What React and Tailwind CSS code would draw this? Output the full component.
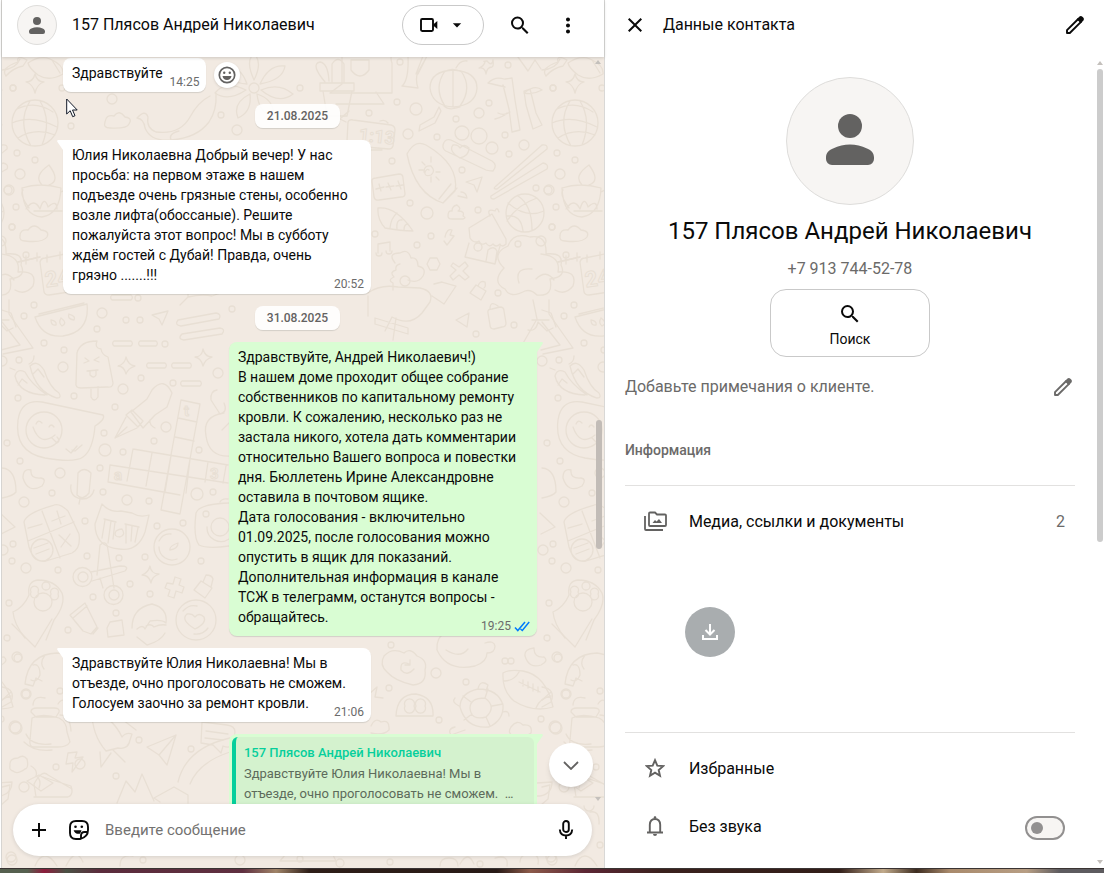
import { MdSearch, MdMoreVert, MdArrowDropDown, MdClose, MdAdd } from 'react-icons/md'

const messages = [
  { id: 1, text: 'Здравствуйте', time: '14:25', reaction: true },
  { id: 2, date: '21.08.2025' },
  {
    id: 3,
    tail: true,
    text: 'Юлия Николаевна Добрый вечер! У нас просьба: на первом этаже в нашем подъезде очень грязные стены, особенно возле лифта(обоссаные). Решите пожалуйста этот вопрос! Мы в субботу ждём гостей с Дубай! Правда, очень гряэно\u00a0.......!!!',
    time: '20:52',
  },
  { id: 4, date: '31.08.2025' },
  {
    id: 5,
    own: true,
    tail: true,
    text: 'Здравствуйте, Андрей Николаевич!)\nВ нашем доме проходит общее собрание собственников по капитальному ремонту кровли. К сожалению, несколько раз не застала никого, хотела дать комментарии относительно Вашего вопроса и повестки дня. Бюллетень Ирине Александровне оставила в почтовом ящике.\nДата голосования - включительно 01.09.2025, после голосования можно опустить в ящик для показаний. Дополнительная информация в канале ТСЖ в телеграмм, останутся вопросы - обращайтесь.',
    time: '19:25',
  },
  {
    id: 6,
    tail: true,
    text: 'Здравствуйте Юлия Николаевна! Мы в отъезде, очно проголосовать не сможем. Голосуем заочно за ремонт кровли.',
    time: '21:06',
  },
]

// small filler circles of the wallpaper: x, y, r
const dots = [
  [13, 88, 3], [62, 88, 3], [112, 99, 5], [71, 126, 3], [300, 88, 3], [221, 115, 3], [237, 130, 5],
  [17, 153, 3], [35, 160, 3], [20, 174, 5], [9, 190, 5], [12, 227, 3], [26, 255, 3], [400, 62, 3],
  [397, 102, 3], [416, 109, 6], [369, 113, 3], [489, 103, 3], [479, 113, 5], [456, 119, 3], [508, 65, 3],
  [553, 88, 3], [408, 134, 5], [437, 137, 3], [505, 135, 3], [524, 145, 5], [509, 154, 3], [392, 161, 3],
  [462, 170, 3], [410, 203, 3], [427, 213, 6], [478, 210, 3], [536, 188, 3], [548, 190, 4], [556, 207, 3],
  [552, 227, 3], [541, 241, 5], [518, 244, 3], [375, 234, 3], [431, 236, 3], [417, 245, 3], [498, 293, 3],
  [514, 325, 3], [476, 334, 3], [34, 305, 3], [24, 316, 3], [102, 313, 5], [97, 329, 3], [126, 320, 3],
  [140, 320, 3], [138, 298, 3], [165, 344, 3], [44, 343, 3], [64, 350, 3], [63, 367, 5], [19, 360, 3],
  [2, 361, 5], [18, 398, 3], [74, 396, 3], [123, 389, 5], [141, 378, 3], [173, 383, 3], [218, 373, 5],
  [232, 309, 3], [115, 407, 3], [104, 433, 3], [105, 450, 6], [123, 452, 3], [154, 441, 3], [166, 427, 5],
  [199, 450, 3], [7, 443, 3], [20, 461, 3], [60, 473, 5], [100, 468, 3], [103, 492, 3], [52, 493, 3],
  [24, 502, 5], [127, 500, 5], [149, 501, 3], [197, 494, 6], [213, 492, 3], [85, 521, 3], [157, 526, 3],
  [183, 523, 3], [206, 514, 3], [13, 544, 3], [3, 550, 5], [12, 561, 3], [26, 568, 5], [58, 570, 3],
  [87, 556, 3], [119, 558, 3], [145, 557, 3], [130, 584, 3], [150, 594, 3], [93, 597, 3], [9, 603, 3],
  [116, 613, 3], [68, 630, 3], [7, 638, 3], [201, 561, 3], [17, 657, 5], [26, 694, 5], [60, 691, 3],
  [80, 707, 3], [15, 727, 6], [139, 740, 3], [191, 749, 3], [56, 767, 3], [116, 776, 3], [80, 764, 5],
  [391, 645, 3], [436, 673, 5], [466, 682, 3], [389, 688, 3], [439, 720, 3], [505, 661, 3], [511, 661, 3],
  [558, 658, 4], [566, 694, 4], [541, 719, 3], [556, 728, 6], [24, 787, 5], [11, 857, 5], [60, 845, 3],
  [143, 860, 3], [390, 862, 3], [552, 860, 5], [480, 864, 3], [240, 860, 5], [300, 859, 3], [340, 863, 4],
]

const doodles = [
  // globe
  'M12 123a23 23 0 1 0 46 0a23 23 0 1 0-46 0M17 109q18-9 36 3M12 123q20-9 45 4M18 138q17-11 37-3M30 101q-13 21 1 45M40 101q12 20 2 44',
  'M35 74q2 8 9 8q-7 2-9 11q-2-9-9-11q7 0 9-8zM28 63q12-8 22-4q14 6 13 15q-14 8-25 1q-9-7-10-12zM52 60l8 13M2 70q14-1 18-11',
  // whale and clouds
  'M137 118q8-9 11-1q-2 11 8 15q24 3 34-15q8-15 20-21M137 118q7 1 8 10q6 14 26 12q26-2 38-18q8-12 7-28M171 140q-3-6 8-9M105 122q1-8 9-6q5-7 11 1q8 1 4 7q-2 5-19 4q-7 0-5-6z',
  'M20 236q0-7 8-6q6-8 13 0q9 1 6 7q-4 6-22 4q-6 0-5-5z',
  // flower
  'M254 80q-9-20 0-26q9 8 0 26M260 84q9-20 25-18q-2 14-25 18M261 90q18-8 32 4q-14 11-32-4M257 94q18 6 16 22q-14-3-16-22M250 94q2 18-12 24q-6-15 12-24M246 90q-18 12-31 3q10-13 31-3M247 84q-20-1-23-17q16-3 23 17M249 88a5 5 0 1 0 10 0a5 5 0 1 0-10 0',
  // cactus
  'M320 83h34v8h-34zM323 91l4 25h20l5-25M325 82q-15-18-5-20q8 1 9 19M332 82v-18q6-9 12 0v18',
  // laptop guy
  'M342 56v28l-12 9h62V63q-2-5 0-8M351 60h18v10q-9 12-18 0zM376 92l8 12h-48',
  // horn
  'M408 56q1 24-6 30l16 2q-3-9 0-16l8-14M423 56l-7 18M427 56l-9 18',
  // lantern
  'M430 88q0-17 24-18q23 2 23 18q-1 17-23 19q-22-1-24-19M445 71q-12 17 0 35M461 71q12 17-1 35M453 70v37M444 72q8-5 18 0M456 68q4-8 11-7M444 106q5 5 16 1M441 111l-6 12-16 8 1-6 14-8 5-10z',
  // fox
  'M518 57l10 14 7-11 6 9M546 76q-6-8 12-14q-2-8 9-2l-4 6q-10 2-17 10',
  'M485 62q-3-1 2-1q5 6 6-1q1 6-1 7q-5 0-6 7q-1-7-7-6q5-2 6-6z',
  // bamboo
  'M505 79l7-1 3 22 5 30-8 2-3-23-6-24M524 91l6-2 6 24 6 12-9 4-7-24zM488 83q7-7 16-4M488 83l17 4M524 93q11-9 18-3q-9 5-18 3M498 113q6 3 12-1M495 119q8-2 12-6',
  // clock
  'M348 122q1-3 5-2l38 5q4 1 4 5l-2 16q-1 3-4 3l-36-3q-6-1-6-5zM380 121q5-2 8 2M352 150h30M341 118l8-7M346 122l-6-3',
  // diya lamp
  'M22 188q18-6 39 0q-1 26-19 29q-19-1-20-29M42 185q-9-9 7-20q12 16 0 20M23 190q-4 4 6 18M26 209q8-12 14 0q4-14 8-2q9-8 9 2M61 192q10-6 14 1M34 211h28',
  // surfboard
  'M407 154q8-15 19-9q34 20 29 46l-12 12q-28-9-36-49M451 184l-12 15M457 188l-14 15M461 192q5 0 6 6l-9-2M424 172q0-7 7-6q5 5 0 9q-7 2-6-3q2-4 4-2M431 157v5M431 182v-5M419 170h4M440 172h-4M422 162l3 3M439 180l-3-3',
  // sofa cushions
  'M443 145q2-8 10-4l39 20q6 4 1 10q-4 0-7-1l-38-18q-6-2-5-7M455 133a7 7 0 1 0 14 0a7 7 0 1 0-14 0M471 136a8 8 0 1 0 16 0a8 8 0 1 0-16 0M486 148a6 6 0 1 0 12 0a6 6 0 1 0-12 0M460 158q-12-7-7-13q5-1 7 3q4-5 9 0q0 8-9 10',
  'M466 182l16-5-5 15-3-7zM372 181q0-3 4-3l23-4q4 0 4 4l2 16q0 3-4 3l-22 3q-4 1-5-3zM376 189l8-2M379 184l2 7M386 187l8-1M388 183l3 7M396 186l7-1M398 181l3 8',
  // chopsticks
  'M496 186l46-41q6-1 5 4l-50 40q-5 0-1-3M491 196l52-33q6 1 4 6l-53 30q-4 0-3-3',
  // basketball
  'M506 213a19 19 0 1 0 38 0a19 19 0 1 0-38 0M508 203q18 16 36 8M518 196q14 9 14 34M537 198q-20 7-30 23M507 216q14-2 16 15',
  // shell, poop, notes
  'M378 208q18-2 35 23q-12 0-28-3q-8-9-7-20M390 228q1-10 7-15M397 229q-1-10 5-9M404 230q0-6 4-6M448 216q0-6 4-5q0-5 5-6q5 4 1 6q7 0 5 5q4 2 0 3h-11q-4 0-4-3M378 253v-9l12-2v9M376 253a3 3 0 1 0 6 0M386 251a3 3 0 1 0 6 0',
  // hut
  'M469 228l23-14 14 25v5q-4 4-6 0q-4 4-7 0q-4 4-7-1q-5 3-7-2q-5 3-9-3zM469 243l-4 14 30 7 5-18M474 247a3 3 0 1 0 8 0a3 3 0 1 0-8 0M486 261l2-11q6-5 9 1l-2 13M490 216q-4-8 5-5q2-5 4 1M445 237q2-9 7-7l-2 5 4 1-7 9-3-4',
  'M427 264l3-6h7l3 6-3 6h-7zM453 263l6 4 6-5 3 4-5 5 6 6-4 3-6-5-6 5-3-4 6-6-5-4zM395 263q-8-10 5-10q8-5 11 5q7-1 7 8q9 2 5 10q-5 8-15 4M393 290v-7q-6-3 1-6q-5-5 2-7q-1-5 4-6M400 281a5 5 0 1 0 10 0a5 5 0 1 0-10 0',
  // runner
  'M368 293q12-9 30-6l22 1q14 3 10 14l-8 11q-12 14-30 4l-7 14M368 296v20M434 284l8-2 14 4-12 18-12-8M396 318l-3 22M375 318l33 10v6l-33-10z',
  // tree cloud
  'M505 289q-14-7-1-21q-14-14 4-22q5-14 22-9q17-3 16 17q18-2 15 11q6 12-11 14q4 18-13 16q-6-6-12-4q-15 8-20-2M519 283q-5-16 13-14M536 279q10-10 18 1M533 300l4 19-15 26M549 300v14l24 34-30 6M532 320h17M528 330q8 2 10-8l9 9 6-3',
  'M558 262l22-5M566 256v8M577 253v8M18 262l22-5',
  'M40 262q1-4 5-4l20-4q4 1 4 4l4 30q0 4-4 4l-20 3q-4 0-5-3zM47 255v7M60 252v7M1 254q20 2 17 18q20-2 15 14q-8 10-18 4',
  'M470 293l6-8 10 6-5 9zM478 286q2-6 7-4q1 5-1 6M488 313q-1-4 4-4l8-2q4 0 4 4l2 12q0 4-4 4l-8 2q-4 0-4-4zM490 309q0-9 8-3M456 320l13-7-2 14z',
  // watermelon
  'M35 317l52-13q3 28-24 32q-21 2-28-19M39 314l45-11M51 320q6 1 5 5q-5 1-5-5M61 318q7 5 1 8q-4-3-1-8M69 314q7 2 5 6q-7-1-5-6M2 322l18 23-19 5M2 310l9 3 5 14',
  // dashes and sliders
  'M112 295h19a3 3 0 0 1 0 5h-19a3 3 0 0 1 0-5M114 341h17a3 3 0 0 1 0 5h-17a3 3 0 0 1 0-5M140 341h16a3 3 0 0 1 0 5h-16a3 3 0 0 1 0-5M148 363h17a3 3 0 0 1 0 5h-17a3 3 0 0 1 0-5M173 363h17a3 3 0 0 1 0 5h-17a3 3 0 0 1 0-5M182 381h18a3 3 0 0 1 0 5h-18a3 3 0 0 1 0-5M178 320l38-7q6 1 3 6l-38 7q-7-1-3-6M182 334l38-6q6 1 2 6l-38 6q-7-1-2-6M152 315l16-4-6 14-3-6z',
  'M180 305l8-8v-6M188 297q14-3 24-1l14-5',
  // popsicle
  'M77 353q3-12 20-12q-3 7 4 8q1 6 7 8l5 26q0 5-6 4l-26 1q-6 0-5-5zM91 388v9q3 6 7 0v-10M85 358l4 3-5 2M99 357l-5 3 5 2M87 371l11-1M90 371v4q4 4 6 0v-5',
  'M126 357q2 8 9 9q-7 2-9 8q-2-8-8-8q7-2 8-9zM203 349q2 8 9 8q-7 2-9 9q-2-8-8-9q7 0 8-8z',
  // chili
  'M30 366q7-7 14 4q6 18 15 23q3 5-2 5q-21-6-27-32M15 376q2-8 10-4q6 12 22 23M29 364q5-2 5-8M15 370l-5-2M33 374l5-5 6 8M18 385l4-6 5 4M15 376q4 18 30 19',
  // chat bubble
  'M18 420q3-21 24-18l61 13q3 4-8 11q-2 24-12 31q-8 6-38 1q-31-6-27-38M26 430a18 18 0 1 0 36 0a18 18 0 1 0-36 0M33 427q7 20 22 8M36 424q2-5 6-1M49 427q2-4 5 0M52 438l5 5q4-2 0-6M66 449l5 4 6-7M72 450l3 1 7-6',
  // ink pen
  'M131 412l16-13 5-9q12-14 20 3l-5 14-12 8-12 13zM126 415l6-5 11 11-5 6zM126 417l-11 21 22-10M115 438l12-11M150 420q-1 5 5 8',
  'M217 390q-7 1-6 10l9 14q8-2 4-11M206 436q-4-20 18-23M206 436q3 22 26 20M222 430l8-8',
  // crossword
  'M181 400l19 4-20 110-19-4zM178 418l19 4M175 437l19 4M133 449l95 16M110 465l118 18M133 449l-6 32M152 453l-6 33M110 465l-2 17 72 13M171 456l-6 36M190 459l-4 34M208 462l-3 20M226 466l-3 17',
  'M31 470q-8-2-8 8q5 16 19 8q5-7-1-8q-11 1-10-8M78 473q6-7 13 0l-2 20q-6 8-12 2zM71 485q-2 12 11 14q10 0 12-9M80 499l-1 5M2 468q14 1 14 24q-3 4-14 6M0 513l15 14-14 7',
  // calculator
  'M24 522q2-9 30-17q6-2 14 6l11 23q2 15-7 19l-26 8q-12 2-17-14zM42 511l18 47M28 541l46-19M28 528l14-4M57 511l4 13M52 521l13-5M59 535l12 11M70 534l-9 13M31 550a11 11 0 1 0 22 0a11 11 0 1 0-22 0M34 548l14-5M36 554l13-5',
  // cat
  'M102 504q8 9 19 7l11 2q8 5 17 2q-2 9-4 17q-7 20-26 17q-24-2-24-25zM105 520l-3 18M111 521l-3 22M115 522l-2 17M126 525v18M132 526l-1 15M138 528l-3 14M116 531q-3 6 4 6q6-2 2-8q-3 0-6 2M104 519l12 3M125 524l14 3',
  // stopwatch and camera
  'M154 547a18 18 0 1 0 36 0a18 18 0 1 0-36 0M159 547a13 13 0 0 0 18 12M170 550q-1-4 8-7q0 6-8 7M159 541q4-8 12-7M196 513q3-9 33-10M196 513q-3 24 3 32q8 4 30 1M211 527a9 9 0 1 0 18 0a9 9 0 1 0-18 0M207 527a14 14 0 0 0 22 12M220 502q2-4 8-3',
  // scissors
  'M73 577a9 9 0 1 0 19 0a9 9 0 1 0-19 0M78 577a5 5 0 1 0 10 0a5 5 0 1 0-10 0M104 595a9 9 0 1 0 19 0a9 9 0 1 0-19 0M109 595a5 5 0 1 0 10 0a5 5 0 1 0-10 0M91 572l29-6q10 0 5 5l-33 10M97 575l3-30q7-6 8 5l6 38M103 588l-3-10',
  'M150 566q1 8 9 8q-7 2-8 9q-2-8-9-8q6-2 8-9zM167 583l6 1 2-7 6 2-2 6 5 2-2 6-6-2-2 7-6-2 2-6-5-2zM194 590l7-9 11 7-7 10zM203 582l3-7q6 0 7 4l-2 8',
  // foot and tube
  'M13 612q11-5 16-17q-2-14 9-15q17 0 24 13q4 11-8 27l-8 20M31 592a4 4 0 1 0 7 0a4 4 0 1 0-7 0M42 586a4 4 0 1 0 8 0a4 4 0 1 0-8 0M51 594a4 4 0 1 0 7 0a4 4 0 1 0-7 0M34 602a9 9 0 1 0 18 0a9 9 0 1 0-18 0M13 612q1 12 12 26M70 615l15-12 12 24-6 7-8-3zM73 618l14-12M98 628l-5 6',
  'M132 628q0-20 20-24q16 4 14 19q-4-4-16-2l-5 8q-2-5-8 0M146 626q5-3 8 1q6-3 12-2M137 637l10 8q14-4 18-12M107 628l3-6 12-2 2 15-16 2zM176 620a20 20 0 1 0 40 0a20 20 0 1 0-40 0M195 629q-15-9-8-15q5-1 8 3q4-5 9 0q3 6-9 12M183 611q6-7 14-5M208 628q-5 7-14 6',
  // heart
  'M12 624l23 23 17-28',
  // taco
  'M25 684q3-30 32-31q14 2 13 8M25 684l8 2 3-8 6 3M33 665q7-2 7 10q-3 8-9 5M45 655q-6 8-1 14M2 687q14 2 9 15l-9 5M2 700l9-8',
  // backpack
  'M31 712q0-4 6-4h17q6 0 5 4l-3 5H36zM33 705q1-10 12-7M58 704q6-9 10 3M32 718q10-5 27 0q8 4 8 14l3 10q-3 5-12 5H34q-5 0-4-7zM26 734q5 12 25 10M24 742q10 10 28 8M60 715q10 0 11 16',
  // rocket, hand
  'M92 712q20 4 30 25q4-5 10-3l-2 6q-2 10-12 8l-12 3q-14-16-14-39M100 752l1 15 10-14M113 750l12 12M118 716l18 14',
  'M68 753l9-1-2 6 8-1-11 15 1-9-7 1zM147 747l29-12-9 30-8-10zM159 755l17-20M10 766q-1-8 8-8q5-4 9 1q2 9-2 10q-8 6-12 2q-4-1-3-5M31 766q7 4 5 10q6 4 3 12',
  // crown and chat
  'M202 722l25 3q8 1 8 7l-2 12q-3 5-10 2l-2 7-8-8-12-2zM206 731l22 3M205 738l18 2',
  // car bus
  'M36 797l-2-13q8-15 14-9l24 14M34 797h34q6-2 3-11l-28-9M44 806a5 5 0 1 0 10 0M117 803l9-22 9 11 7-18 12 27M178 782q8-34 52-44M190 784q9-22 40-32M160 802l-6-4 20-11 14 8v8M2 787l8-2-2 14-7 6',
  // refresh cloud
  'M384 656q8-9 20-3q6-6 13 3q11 4 8 14q2 14-12 15q-18-4-26-13q-8-7-3-16M409 664q-9-4-8 6q6 7 13-1M410 660v5h-5',
  // boy
  'M437 650q-1-13 9-18M437 650q10 22 38 16q12-4 12-13q8 0 8-7q-1-6-10-3M446 650q14 9 22-1',
  // moon and football
  'M534 648q-10 1-9 8q4 13 16 9q8-4 3-8q-10 1-10-9M503 673q6-4 20-2q23 4 30 36q-20 6-39-6q-12-10-11-28M519 682l21 10M523 680v6M528 682v6M533 684v7M538 687v5M504 681q10 0 15-9M536 708q4-10 15-12',
  // turtle
  'M460 707q0-14 18-18q20 0 25 16q1 15-14 22q-23 2-29-20M470 708q0-10 15-10q12 9 1 19q-15 4-16-9M478 689q2-10 10-4l-2 6M459 706q-8-4-4-8M455 727q-8 2-4 8l14-5M503 712q6-2 6 4M485 698l3-9M492 706l11-2M486 717l4 9M472 714l-8 6M471 702l-8-6',
  // ghost
  'M396 716q1-22 20-22q18 3 17 22zM405 706a5 5 0 1 0 9 0a5 5 0 1 0-9 0M416 706a5 5 0 1 0 9 0a5 5 0 1 0-9 0M368 695l9-8-2 10 8 1M371 726q4-9 10-4q9-3 8 8q-6 6-18 3M511 727q6-8 12-2q10-1 8 8q-4 4-18 3q-6-3-2-9',
  // bottom row
  'M522 784l30-2q0 12-12 14h-14zM567 781l12-6 14 8-12 8zM590 812q10-2 9 12M35 866q4-10 10-10t12 10M66 866q10-20 17-4M120 866q0-12 13-10M280 861l10-12h40l6 12zM440 866q0-8 9-8t9 8M460 864q8-14 14 0M495 858q14-4 12 8M520 862q0-8 10-8t8 10',
]

function Wallpaper() {
  return (
    <svg className="absolute inset-0 h-full w-full" aria-hidden="true">
      <defs>
        <g id="doodles" fill="none" stroke="#e8dfd4" strokeWidth="1.3" strokeLinejoin="round" strokeLinecap="round">
          {doodles.map((d) => <path key={d} d={d} />)}
          {dots.map(([x, y, r], i) => <circle key={i} cx={x} cy={y} r={r} />)}
          <g fontFamily="Roboto, sans-serif" fontWeight="700" strokeWidth="1">
            <text x="359" y="142" fontSize="18" transform="rotate(6 371 135)">1:13</text>
            <text x="45" y="286" fontSize="22" transform="rotate(-8 56 280)">24</text>
            <text x="184" y="416" fontSize="15">t</text>
            <text x="114" y="480" fontSize="15">a</text>
            <text x="210" y="479" fontSize="15">3</text>
          </g>
        </g>
      </defs>
      <g transform="translate(-2 -57)">
        <use href="#doodles" x="-540" />
        <use href="#doodles" />
        <use href="#doodles" x="540" />
        <use href="#doodles" x="1080" />
      </g>
    </svg>
  )
}

const PersonIcon = ({ className }) => (
  <svg viewBox="0 0 48 51" className={className} fill="currentColor">
    <circle cx="24" cy="12" r="12" />
    <path d="M0 43.500C0 39 2.500 36.500 7 34.500C18 29 30 29 41 34.500C45.500 36.500 48 39 48 43.500V45a6 6 0 0 1-6 6H6a6 6 0 0 1-6-6z" />
  </svg>
)

const VideoIcon = () => (
  <svg viewBox="0 0 18 14" className="h-3.5 w-[18px]">
    <rect x="1" y="1" width="12" height="12" rx="1.2" fill="none" stroke="currentColor" strokeWidth="1.900" />
    <path d="M13.500 6.200L17.300 3v8l-3.800-3.200z" fill="currentColor" />
  </svg>
)

const PencilIcon = () => (
  <svg viewBox="0 0 18 18" className="size-[18px]">
    <path d="M1 17v-2.800L12.200 3l2.800 2.800L3.800 17z" fill="none" stroke="currentColor" strokeWidth="1.900" strokeLinejoin="round" />
    <path d="M10.800 3.200L13.200.8q1.600-1.400 3.200 0l.8.800q1.400 1.600 0 3.200l-2.400 2.400z" fill="currentColor" />
  </svg>
)

const SmileIcon = () => (
  <svg viewBox="0 0 18 18" className="size-[18px]">
    <circle cx="9" cy="9" r="7.700" fill="none" stroke="currentColor" strokeWidth="1.700" />
    <circle cx="6.200" cy="6.800" r="1.200" fill="currentColor" />
    <circle cx="11.800" cy="6.800" r="1.200" fill="currentColor" />
    <path d="M4.500 10h9q-.8 4-4.500 4t-4.500-4z" fill="currentColor" />
  </svg>
)

const StickerIcon = () => (
  <svg viewBox="0 0 20 20" className="size-5" fill="none" stroke="currentColor" strokeWidth="1.900">
    <path d="M19 10V7q0-6-6-6H7Q1 1 1 7v6q0 6 6 6h4q8-2 8-9z" />
    <path d="M18.500 12h-3q-3.500 0-3.500 3.500v3" />
    <path d="M4.600 10.200h7.900q-.3 1.800-1.700 3.600-5 .4-6.200-3.600z" fill="currentColor" stroke="none" />
    <circle cx="6.500" cy="6.800" r="1.300" fill="currentColor" stroke="none" />
    <circle cx="12.800" cy="6.800" r="1.300" fill="currentColor" stroke="none" />
  </svg>
)

const MicIcon = () => (
  <svg viewBox="0 0 16 20" className="h-5 w-4" fill="none" stroke="currentColor" strokeWidth="1.900">
    <rect x="5.200" y="1" width="5.600" height="11" rx="2.800" />
    <path d="M1.800 9.500q.4 6 6.200 6t6.200-6M8 15.500V19" />
  </svg>
)

const MediaIcon = () => (
  <svg viewBox="0 0 24 20" className="h-5 w-6" fill="none" stroke="currentColor" strokeWidth="1.800">
    <path d="M2 5v13q0 1 1 1h17" />
    <path d="M6 2.500q0-1 1-1h5l2 2h8q1 0 1 1v9.500q0 1-1 1H7q-1 0-1-1z" />
    <path d="M9.500 12l2.500-3 1.500 1.500L16 8l3 4z" fill="currentColor" stroke="none" />
  </svg>
)

const StarIcon = () => (
  <svg viewBox="0 0 20 20" className="size-5" fill="none" stroke="currentColor" strokeWidth="1.900">
    <path d="M10 2.200l2.300 5.400 5.800.5-4.400 3.900 1.300 5.800-5-3.100-5 3.100L6.300 12 1.900 8.100l5.800-.5z" />
  </svg>
)

const BellIcon = () => (
  <svg viewBox="0 0 18 20" className="h-5 w-[18px]" fill="none" stroke="currentColor" strokeWidth="1.900">
    <path d="M1 16.500h16M3.800 16.500V8.800Q4 3 9 3t5.200 5.800v7.700" />
    <path d="M7.500 2.500Q7.500 0 9 0t1.500 2.500zM7 18q0 2 2 2t2-2z" fill="currentColor" stroke="none" />
  </svg>
)

const DownloadIcon = () => (
  <svg viewBox="0 0 16 16" className="size-4" fill="none" stroke="currentColor" strokeWidth="2">
    <path d="M8 0v10M3.500 6L8 10.500 12.500 6M1 11v4h14v-4" />
  </svg>
)

const Ticks = () => (
  <svg viewBox="0 0 16 11" className="h-[11px] w-4" fill="none" stroke="#007bfc" strokeWidth="1.500">
    <path d="M1 6.500L3.800 9.500 11 1M6.500 8l1.800 1.500L15.200 1" />
  </svg>
)

function ScrollArrow({ down }) {
  return (
    <svg viewBox="0 0 6 4" className="h-1 w-1.5 shrink-0 text-[#c4c0bc]" fill="currentColor">
      <path d={down ? 'M0 0h6L3 4z' : 'M0 4h6L3 0z'} />
    </svg>
  )
}

function Tail({ own }) {
  return (
    <svg
      viewBox="0 0 8 12"
      className={own ? 'absolute top-0 -right-1.5 h-3 w-2 text-[#d9fdd3]' : 'absolute top-0 -left-1.5 h-3 w-2 text-white'}
      fill="currentColor"
    >
      <path d={own ? 'M0 0h7q1.500.5.500 2L2 10H0z' : 'M8 0H1Q-.5.5.500 2L6 10h2z'} />
    </svg>
  )
}

function Bubble({ message }) {
  const { text, time, own, tail, reaction } = message
  return (
    <div className={own ? 'flex justify-end' : 'flex items-center gap-2'}>
      <div
        className={`relative max-w-[308px] rounded-lg pt-[5px] pr-[7px] pb-[9px] pl-[9px] shadow-[0_1px_1px_rgba(11,20,26,0.13)] ${
          own ? 'bg-[#d9fdd3]' : 'bg-white'
        } ${tail && (own ? 'rounded-tr-none' : 'rounded-tl-none')}`}
      >
        {tail && <Tail own={own} />}
        <p className="text-sm leading-5 whitespace-pre-line">
          {text}
          <span className="float-right mt-[11px] -mb-2 ml-[7px] flex items-center gap-[3px] text-xs leading-4 text-[#6b6b6b]">
            {time}
            {own && <Ticks />}
          </span>
        </p>
      </div>
      {reaction && (
        <button aria-label="Реакция" className="flex size-[26px] items-center justify-center rounded-full bg-white text-[#636261] shadow-sm">
          <SmileIcon />
        </button>
      )}
    </div>
  )
}

function Chat() {
  return (
    <section className="ml-px flex min-w-0 flex-[603] flex-col border-l border-[#d6d4d1]">
      <header className="z-10 flex h-[57px] shrink-0 items-center bg-white pt-px pr-6 pb-2 pl-[15px] shadow-[0_1px_3px_rgba(11,20,26,0.16)]">
        <div className="flex size-10 shrink-0 items-center justify-center rounded-full border border-[#dedddb] bg-[#f7f5f3] text-[#636261]">
          <PersonIcon className="h-[17px] w-4" />
        </div>
        <h1 className="ml-[15px] flex-1 truncate text-base">157 Плясов Андрей Николаевич</h1>
        <button aria-label="Видеозвонок" className="flex h-10 w-[82px] items-center justify-between rounded-full border border-[#c9c9c9] pr-4 pl-[17px]">
          <VideoIcon />
          <MdArrowDropDown size={20} />
        </button>
        <button aria-label="Поиск в чате" className="ml-6 flex w-6 justify-center"><MdSearch size={25} /></button>
        <button aria-label="Меню" className="ml-6 flex w-6 justify-center"><MdMoreVert size={25} /></button>
      </header>

      <div className="relative flex min-h-0 flex-1 flex-col bg-[#f2eae2]">
        <Wallpaper />
        <div className="relative flex min-h-0 flex-1">
          <div className="flex min-w-0 flex-1 flex-col gap-3 overflow-hidden pt-px pr-14 pl-[61px]">
            {messages.map((m) =>
              m.date ? (
                <div key={m.id} className="-mr-14 -ml-[61px] flex justify-center">
                  <span className="rounded-lg bg-white/90 px-3 py-1 text-xs leading-4 font-medium text-[#636261] shadow-[0_1px_1px_rgba(11,20,26,0.13)]">
                    {m.date}
                  </span>
                </div>
              ) : (
                <Bubble key={m.id} message={m} />
              )
            )}
            <div className="flex shrink-0 justify-end">
              <div className="relative w-[308px] rounded-lg rounded-tr-none bg-[#d9fdd3] p-[3px]">
                <Tail own />
                <blockquote className="h-24 overflow-hidden rounded-md border-l-4 border-[#06cf9c] bg-[#d4f2ce] pt-1 pl-2 text-[13px] leading-5 text-[#5d6b5b]">
                  <cite className="block leading-[23px] font-medium text-[#06cf9c] not-italic">157 Плясов Андрей Николаевич</cite>
                  Здравствуйте Юлия Николаевна! Мы в отъезде, очно проголосовать не сможем.&nbsp; …
                </blockquote>
              </div>
            </div>
          </div>
          <div className="flex w-[11px] flex-col items-center justify-between pt-[3px] pb-[3px]">
            <ScrollArrow />
            <ScrollArrow down />
          </div>
          <div className="absolute top-[363px] right-0.5 h-[129px] w-1.5 rounded-full bg-[#c2bcb7]" />
          <button aria-label="Вниз" className="absolute right-[11px] bottom-[17px] flex size-11 items-center justify-center rounded-full bg-white text-[#636261] shadow-md">
            <svg viewBox="0 0 16 9" className="h-[9px] w-4" fill="none" stroke="currentColor" strokeWidth="1.800">
              <path d="M1 1l7 7 7-7" />
            </svg>
          </button>
        </div>

        <form className="relative mr-3 mb-3 ml-[11px] flex h-[52px] shrink-0 items-center rounded-full bg-white pr-[18px] pl-3.5 shadow-[0_1px_4px_rgba(11,20,26,0.12)]">
          <button type="button" aria-label="Прикрепить" className="flex w-6 justify-center"><MdAdd size={24} /></button>
          <button type="button" aria-label="Стикеры" className="ml-4 flex w-6 justify-center"><StickerIcon /></button>
          <input
            aria-label="Введите сообщение"
            placeholder="Введите сообщение"
            className="ml-3.5 min-w-0 flex-1 text-[15px] outline-none placeholder:text-[#737271]"
          />
          <button type="button" aria-label="Голосовое сообщение" className="flex w-4 justify-center"><MicIcon /></button>
        </form>
      </div>
    </section>
  )
}

function Contact() {
  return (
    <aside className="flex min-w-0 flex-[500] flex-col border-l border-[#d9d8d6] bg-white">
      <header className="flex h-[57px] shrink-0 items-center pr-5 pb-2 pl-[18px]">
        <button aria-label="Закрыть"><MdClose size={24} /></button>
        <h2 className="ml-4 flex-1 text-base">Данные контакта</h2>
        <button aria-label="Изменить"><PencilIcon /></button>
      </header>
      <div className="flex min-h-0 flex-1">
        <div className="min-w-0 flex-1 overflow-hidden px-5 pt-5">
          <div className="flex flex-col items-center">
            <div className="flex size-32 items-center justify-center rounded-full border border-[#dedddb] bg-[#f7f5f3] pb-[3px] text-[#636261]">
              <PersonIcon className="h-[51px] w-12" />
            </div>
            <h2 className="mt-2.5 text-2xl leading-8">157 Плясов Андрей Николаевич</h2>
            <p className="mt-2.5 text-base leading-6 text-[#6b6a69]">+7 913 744-52-78</p>
            <button className="mt-2 flex h-[68px] w-40 flex-col items-center justify-center gap-[3px] rounded-2xl border border-[#c9c9c9] pt-[5px] text-sm leading-5">
              <MdSearch size={24} />
              Поиск
            </button>
          </div>
          <div className="mt-[18px] flex h-6 items-center justify-between pr-[3px] text-[#6b6a69]">
            <p className="text-base">Добавьте примечания о клиенте.</p>
            <button aria-label="Изменить примечание"><PencilIcon /></button>
          </div>
          <h3 className="mt-[41px] text-sm leading-5 font-medium text-[#6b6a69]">Информация</h3>
          <hr className="mt-[25px] mb-1.5 border-[#e2e1e0]" />
          <button className="flex h-[58px] w-full items-center pr-2.5 pl-[18px] text-left">
            <span className="flex w-6 justify-center text-[#636261]"><MediaIcon /></span>
            <span className="ml-[22px] flex-1 pt-0.5 text-base">Медиа, ссылки и документы</span>
            <span className="pt-0.5 text-base text-[#6b6a69]">2</span>
          </button>
          <div className="pt-[7px] pb-[25px] pl-2.5">
            <div className="flex size-[150px] items-center justify-center">
              <button aria-label="Скачать" className="flex size-[50px] items-center justify-center rounded-full bg-[#a9adaf] text-white">
                <DownloadIcon />
              </button>
            </div>
          </div>
          <hr className="mb-1.5 border-[#e2e1e0]" />
          <button className="flex h-[58px] w-full items-center pl-[18px] text-left">
            <span className="flex w-6 justify-center text-[#636261]"><StarIcon /></span>
            <span className="ml-[22px] pt-0.5 text-base">Избранные</span>
          </button>
          <label className="flex h-[58px] items-center pr-2.5 pl-[18px]">
            <span className="flex w-6 justify-center text-[#636261]"><BellIcon /></span>
            <span className="ml-[22px] flex-1 pt-0.5 text-base">Без звука</span>
            <input
              type="checkbox"
              role="switch"
              className="mt-1 h-6 w-10 appearance-none rounded-full border-2 border-[#929090] bg-[#f7f5f3] p-1 before:block before:size-3 before:rounded-full before:bg-[#929090]"
            />
          </label>
        </div>
        <div className="flex w-[9px] flex-col items-start pt-1 pb-1 pl-0.5">
          <ScrollArrow />
          <div className="mt-1 h-[473px] w-1.5 rounded-full bg-[#cccccc]" />
          <div className="flex-1" />
          <ScrollArrow down />
        </div>
      </div>
    </aside>
  )
}

export default function App() {
  return (
    <div className="relative flex h-screen flex-col overflow-hidden bg-white font-[Roboto,'Liberation_Sans',sans-serif] text-[#0a0a0a]">
      <main className="flex min-h-0 flex-1">
        <Chat />
        <Contact />
      </main>
      <div className="h-[5px] shrink-0 border-t border-[#3a3433] bg-[linear-gradient(90deg,#56604f_0%,#56604f_2.500%,#8c1c3c_4%,#4a5144_6%,#5b2c3c_9%,#5f2f40_22%,#a08468_25%,#2e1e18_28%,#281a16_45%,#8c5a4a_48%,#5c2634_53%,#3a211d_60%,#321e19_76%,#c2ab8c_80%,#3d2c20_83%,#a98a6c_86%,#b79e84_93%,#5d5b5f_96%,#5d5b5f_100%)]" />
      <svg viewBox="0 0 12 20" className="absolute top-[98px] left-[66px] h-5 w-3">
        <path d="M.7 1v15l3.500-3.300 2.500 6 2.300-1-2.500-5.700h4.700z" fill="#fff" stroke="#111827" strokeWidth="1" />
      </svg>
    </div>
  )
}
